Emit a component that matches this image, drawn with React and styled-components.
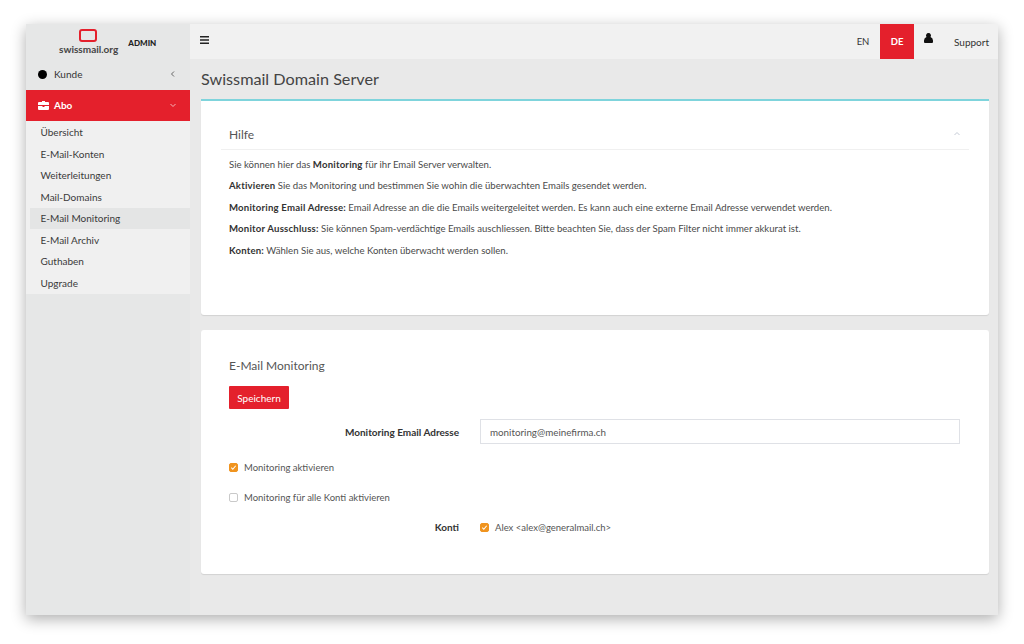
import React from "react";
import styled, { createGlobalStyle } from "styled-components";

const Global = createGlobalStyle`
  html, body { margin: 0; padding: 0; background: #fff; }
  body { font-family: "Lato", "Noto Sans", sans-serif; color: #3a3a3a; }
  * { box-sizing: border-box; }
`;

const Page = styled.div`
  width: 1024px;
  height: 644px;
  padding: 24px 26px 29px;
  overflow: hidden;
`;
const Window = styled.div`
  display: grid;
  grid-template-columns: 164px 1fr;
  height: 591px;
  background: #e9e9e9;
  box-shadow: 0 4px 14px rgba(0, 0, 0, 0.32);
`;
const Sidebar = styled.aside`
  background: #e6e7e7;
  display: flex;
  flex-direction: column;
`;
const Brand = styled.div`
  height: 35px;
  display: flex;
  align-items: center;
  padding-left: 33px;
  gap: 10px;
`;
const Logo = styled.div`
  display: flex;
  flex-direction: column;
  align-items: center;
  font-size: 10px;
  font-weight: 700;
  line-height: 11px;
  color: #444;
  gap: 2px;
`;
const LogoMark = styled.span`
  width: 18px;
  height: 13px;
  margin-right: 2px;
  border: 2px solid #e4202c;
  border-radius: 3px;
`;
const Admin = styled.span`
  font-size: 8px;
  font-weight: 900;
  color: #222;
  margin-top: 2px;
`;
const NavRow = styled.div`
  height: 31px;
  display: flex;
  align-items: center;
  padding: 0 13px 1px 12px;
  font-size: 10px;
  font-weight: ${(p) => (p.$active ? 700 : 400)};
  color: ${(p) => (p.$active ? "#fff" : "#333")};
  background: ${(p) => (p.$active ? "#e4202c" : "transparent")};
`;
const NavIcon = styled.span`
  width: 16px;
  display: flex;
  align-items: center;
`;
const Dot = styled.span`
  width: 9px;
  height: 9px;
  border-radius: 50%;
  background: #000;
`;
const NavLabel = styled.span`
  flex: 1;
`;
const SubMenu = styled.div`
  background: #f0f0f0;
  padding: 0.5px 0 0 4px;
  display: flex;
  flex-direction: column;
`;
const SubItem = styled.div`
  height: 21.5px;
  display: flex;
  align-items: center;
  padding-left: 10.5px;
  font-size: 10px;
  color: #3a3a3a;
  background: ${(p) => (p.$active ? "#e4e5e5" : "transparent")};
`;
const Main = styled.main`
  display: flex;
  flex-direction: column;
  min-width: 0;
`;
const TopBar = styled.header`
  height: 35px;
  background: #f1f1f1;
  display: flex;
  align-items: stretch;
  padding-left: 10px;
`;
const Burger = styled.span`
  display: flex;
  align-items: center;
  flex: 1;
  margin-top: -4px;
`;
const Lang = styled.span`
  width: 34px;
  display: flex;
  align-items: center;
  justify-content: center;
  font-size: 9.5px;
  font-weight: ${(p) => (p.$active ? 700 : 400)};
  color: ${(p) => (p.$active ? "#fff" : "#333")};
  background: ${(p) => (p.$active ? "#e4202c" : "transparent")};
`;
const UserBtn = styled.span`
  width: 28px;
  display: flex;
  justify-content: center;
  padding-top: 9px;
`;
const Support = styled.span`
  width: 56px;
  display: flex;
  align-items: center;
  font-size: 10px;
  color: #333;
  padding-left: 12px;
`;
const Content = styled.div`
  padding: 0 9px 0 11px;
  display: flex;
  flex-direction: column;
`;
const Title = styled.h1`
  margin: 0;
  height: 40px;
  padding-bottom: 2px;
  display: flex;
  align-items: center;
  font-size: 16.2px;
  font-weight: 400;
  color: #444;
`;
const Card = styled.section`
  background: #fff;
  height: ${(p) => p.$h}px;
  margin-bottom: 15px;
  border-top: ${(p) => (p.$accent ? "2px solid #7fd4dc" : "0")};
  border-radius: ${(p) => (p.$accent ? "0 0 3px 3px" : "3px")};
  box-shadow: 0 1px 1px rgba(0, 0, 0, 0.1);
`;
const HelpHead = styled.div`
  margin: 0 20px;
  height: 49px;
  padding: 18px 8px 0;
  display: flex;
  justify-content: space-between;
  align-items: center;
  border-bottom: 1px solid #f0f0f0;
  font-size: 12px;
  color: #555;
`;
const HelpBody = styled.div`
  padding: 3.5px 28px 0;
  display: flex;
  flex-direction: column;
`;
const HelpLine = styled.p`
  margin: 0;
  height: 21.5px;
  display: flex;
  align-items: center;
  white-space: pre;
  font-size: 9.6px;
  color: #4a4a4a;
  b { font-weight: 700; color: #333; letter-spacing: 0.2px; }
`;
const FormBody = styled.div`
  padding: 27px 29px 0 28px;
  display: flex;
  flex-direction: column;
`;
const FormTitle = styled.h2`
  margin: 0;
  font-size: 12px;
  font-weight: 400;
  color: #555;
  line-height: 17px;
`;
const SaveBtn = styled.button`
  width: 60px;
  height: 23px;
  margin-top: 12px;
  padding: 0;
  border: 0;
  border-radius: 1px;
  background: #e4202c;
  color: #fff;
  font: 400 10px "Lato", sans-serif;
`;
const FieldRow = styled.div`
  display: grid;
  grid-template-columns: 230px 1fr;
  column-gap: 21px;
  align-items: center;
  height: ${(p) => p.$h}px;
`;
const FieldLabel = styled.label`
  text-align: right;
  font-size: 10px;
  font-weight: 700;
  color: #333;
`;
const Input = styled.div`
  height: 25px;
  border: 1px solid #dfe1e6;
  display: flex;
  align-items: center;
  padding-left: 9px;
  font-size: 9.8px;
  color: #555;
`;
const CheckRow = styled.div`
  display: flex;
  align-items: center;
  gap: 6px;
  height: ${(p) => p.$h}px;
  padding-top: 1px;
  font-size: 9.5px;
  color: #555;
`;
const Box = styled.span`
  width: 9px;
  height: 9px;
  border-radius: 2px;
  display: flex;
  align-items: center;
  justify-content: center;
  background: ${(p) => (p.$on ? "#f0941f" : "#fff")};
  border: 1px solid ${(p) => (p.$on ? "#f0941f" : "#c9c9c9")};
`;

const Check = ({ on }) => (
  <Box $on={on}>
    {on && (
      <svg width="7" height="7" viewBox="0 0 8 8">
        <path d="M1.5 4.2 3.2 6 6.5 2" fill="none" stroke="#fff" strokeWidth="1.2" />
      </svg>
    )}
  </Box>
);

const Chevron = ({ d, color }) => (
  <svg width="8" height="8" viewBox="0 0 8 8">
    <path d={d} fill="none" stroke={color} strokeWidth="1" />
  </svg>
);

const Brief = () => (
  <svg width="11" height="10" viewBox="0 0 11 10">
    <path d="M4 2V1h3v1h3a1 1 0 0 1 1 1v2H0V3a1 1 0 0 1 1-1zM0 6h4.5v1h2V6H11v3a1 1 0 0 1-1 1H1a1 1 0 0 1-1-1z" fill="#fff" />
  </svg>
);

const subItems = ["Übersicht", "E-Mail-Konten", "Weiterleitungen", "Mail-Domains", "E-Mail Monitoring", "E-Mail Archiv", "Guthaben", "Upgrade"];

export default function App() {
  return (
    <Page>
      <Global />
      <Window>
        <Sidebar>
          <Brand>
            <Logo>
              <LogoMark />
              swissmail.org
            </Logo>
            <Admin>ADMIN</Admin>
          </Brand>
          <NavRow>
            <NavIcon><Dot /></NavIcon>
            <NavLabel>Kunde</NavLabel>
            <Chevron d="M5 1.5 2.5 4 5 6.5" color="#666" />
          </NavRow>
          <NavRow $active>
            <NavIcon><Brief /></NavIcon>
            <NavLabel>Abo</NavLabel>
            <Chevron d="M1.5 3 4 5.5 6.500 3" color="#f5b5b8" />
          </NavRow>
          <SubMenu>
            {subItems.map((s) => (
              <SubItem key={s} $active={s === "E-Mail Monitoring"}>{s}</SubItem>
            ))}
          </SubMenu>
        </Sidebar>
        <Main>
          <TopBar>
            <Burger>
              <svg width="9" height="8" viewBox="0 0 9 8">
                <path d="M0 0h9v1.600H0zM0 3.200h9v1.600H0zM0 6.400h9V8H0z" fill="#222" />
              </svg>
            </Burger>
            <Lang>EN</Lang>
            <Lang $active>DE</Lang>
            <UserBtn>
              <svg width="9" height="10" viewBox="0 0 9 10">
                <path d="M4.500 0a2.500 2.500 0 0 1 2 4 4 4 0 0 1 2.500 3.500V9a1 1 0 0 1-1 1H1a1 1 0 0 1-1-1V7.500A4 4 0 0 1 2.500 4a2.500 2.500 0 0 1 2-4z" fill="#111" />
              </svg>
            </UserBtn>
            <Support>Support</Support>
          </TopBar>
          <Content>
            <Title>Swissmail Domain Server</Title>
            <Card $accent $h={216}>
              <HelpHead>
                Hilfe
                <Chevron d="M1.500 5 4 2.500 6.500 5" color="#c5cbd6" />
              </HelpHead>
              <HelpBody>
                <HelpLine>Sie können hier das <b>Monitoring</b> für ihr Email Server verwalten.</HelpLine>
                <HelpLine><b>Aktivieren</b> Sie das Monitoring und bestimmen Sie wohin die überwachten Emails gesendet werden.</HelpLine>
                <HelpLine><b>Monitoring Email Adresse:</b> Email Adresse an die die Emails weitergeleitet werden. Es kann auch eine externe Email Adresse verwendet werden.</HelpLine>
                <HelpLine><b>Monitor Ausschluss:</b> Sie können Spam-verdächtige Emails auschliessen. Bitte beachten Sie, dass der Spam Filter nicht immer akkurat ist.</HelpLine>
                <HelpLine><b>Konten:</b> Wählen Sie aus, welche Konten überwacht werden sollen.</HelpLine>
              </HelpBody>
            </Card>
            <Card $h={244}>
              <FormBody>
                <FormTitle>E-Mail Monitoring</FormTitle>
                <SaveBtn>Speichern</SaveBtn>
                <FieldRow $h={45}>
                  <FieldLabel>Monitoring Email Adresse</FieldLabel>
                  <Input>monitoring@meinefirma.ch</Input>
                </FieldRow>
                <CheckRow $h={25}><Check on />Monitoring aktivieren</CheckRow>
                <CheckRow $h={35}><Check />Monitoring für alle Konti aktivieren</CheckRow>
                <FieldRow $h={25}>
                  <FieldLabel>Konti</FieldLabel>
                  <CheckRow $h={25}><Check on />Alex &lt;alex@generalmail.ch&gt;</CheckRow>
                </FieldRow>
              </FormBody>
            </Card>
          </Content>
        </Main>
      </Window>
    </Page>
  );
}
